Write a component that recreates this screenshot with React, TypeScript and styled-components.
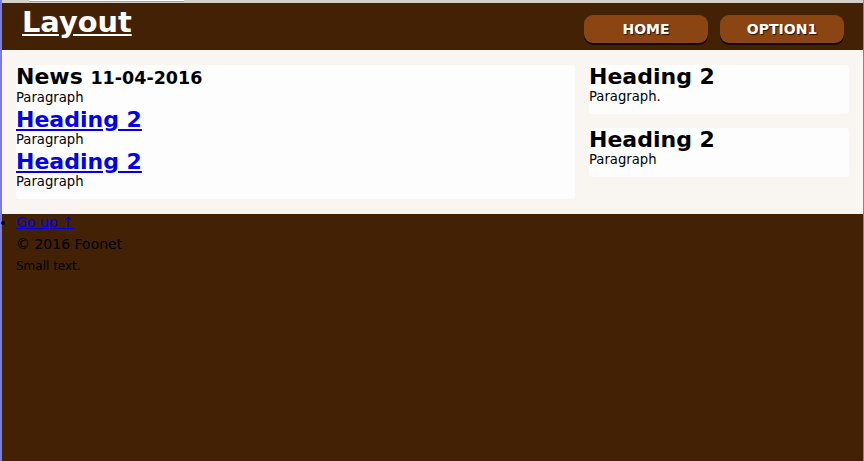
import React from "react";
import styled, { createGlobalStyle } from "styled-components";

const GlobalStyle = createGlobalStyle`
  html, body {
    margin: 0;
    padding: 0;
    height: 100%;
  }
  body {
    font-family: "DejaVu Sans", Verdana, sans-serif;
    background: #432105;
  }
  #root {
    min-height: 100%;
  }
`;

const Frame = styled.div`
  display: flex;
  flex-direction: column;
  min-height: 100vh;
  box-sizing: border-box;
  border-left: 2px solid #7c7ce0;
  border-right: 1px solid #7c7ce0;
`;

const TopStrip = styled.div`
  height: 3px;
  background: #d4d0c8;
  padding-left: 27px;
`;

const Tab = styled.div`
  width: 155px;
  height: 1px;
  background: #ffffff;
  border-bottom: 1px solid #a8a49c;
`;

const Header = styled.header`
  display: flex;
  justify-content: space-between;
  align-items: flex-start;
  height: 47px;
  box-sizing: border-box;
  padding: 2px 19px 0 20px;
  background: #432105;
`;

const Title = styled.a`
  font-size: 28.8px;
  line-height: 34px;
  font-weight: bold;
  color: #ffffff;
  text-decoration: underline;
`;

const Nav = styled.nav`
  display: flex;
  gap: 12px;
  margin-top: 10px;
`;

const NavButton = styled.a`
  display: flex;
  align-items: center;
  justify-content: center;
  width: 124px;
  height: 28px;
  border-radius: 9px;
  background: #8b4513;
  box-shadow: 0 2px 0 #110800;
  color: #ffffff;
  font-size: 14px;
  font-weight: bold;
  text-transform: uppercase;
  text-decoration: none;
  text-shadow: 1px 1px 1px #2a1200;
`;

const Main = styled.main`
  display: grid;
  grid-template-columns: 559fr 260fr;
  gap: 14px;
  align-items: start;
  padding: 15px 14px;
  background: #f9f5f1;
`;

const Side = styled.aside`
  display: flex;
  flex-direction: column;
  gap: 14px;
`;

const Card = styled.section`
  background: #fdfdfd;
  border-radius: 4px;
  padding: 0 0 7px;
`;

const Heading = styled.h2`
  margin: 0;
  padding-top: 2px;
  font-size: 22px;
  line-height: 20px;
  font-weight: bold;
  color: #000000;
`;

const DateTag = styled.span`
  font-size: 17.5px;
  line-height: 1;
`;

const HeadingLink = styled.a`
  color: #0000ee;
  text-decoration: underline;
`;

const Paragraph = styled.p`
  margin: 0;
  font-size: 13.2px;
  line-height: 20px;
  color: #000000;
`;

const Footer = styled.footer`
  flex: 1;
  padding: 0 0 0 14px;
  background: #432105;
  color: #000000;
`;

const FooterList = styled.ul`
  margin: 0;
  padding: 0;
  list-style: disc outside;
`;

const FooterItem = styled.li`
  font-size: 14px;
  line-height: 16px;
`;

const UpLink = styled.a`
  color: #0000ee;
  text-decoration: underline;
`;

const FooterLine = styled.p<{ $small?: boolean }>`
  margin: ${({ $small }) => ($small ? "2px 0 0" : "4px 0 0")};
  font-size: ${({ $small }) => ($small ? "12px" : "14px")};
  line-height: 20px;
`;

const sideNotes = ["Paragraph.", "Paragraph"];

export default function App() {
  return (
    <>
      <GlobalStyle />
      <Frame>
        <TopStrip>
          <Tab />
        </TopStrip>
        <Header>
          <Title href="#">Layout</Title>
          <Nav>
            <NavButton href="#">Home</NavButton>
            <NavButton href="#">Option1</NavButton>
          </Nav>
        </Header>
        <Main>
          <Card>
            <Heading>
              News <DateTag>11-04-2016</DateTag>
            </Heading>
            <Paragraph>Paragraph</Paragraph>
            <Heading>
              <HeadingLink href="#">Heading 2</HeadingLink>
            </Heading>
            <Paragraph>Paragraph</Paragraph>
            <Heading>
              <HeadingLink href="#">Heading 2</HeadingLink>
            </Heading>
            <Paragraph>Paragraph</Paragraph>
          </Card>
          <Side>
            {sideNotes.map((note, i) => (
              <Card key={i}>
                <Heading>Heading 2</Heading>
                <Paragraph>{note}</Paragraph>
              </Card>
            ))}
          </Side>
        </Main>
        <Footer>
          <FooterList>
            <FooterItem>
              <UpLink href="#">Go up ↑</UpLink>
            </FooterItem>
          </FooterList>
          <FooterLine>© 2016 Foonet</FooterLine>
          <FooterLine $small>Small text.</FooterLine>
        </Footer>
      </Frame>
    </>
  );
}
